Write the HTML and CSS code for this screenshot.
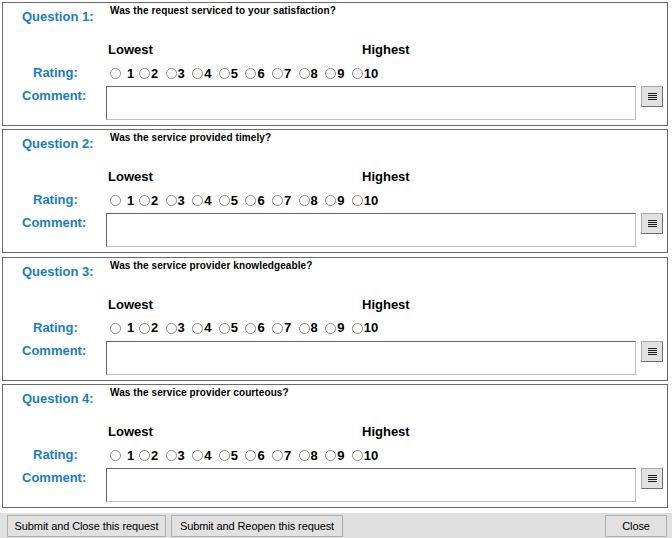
FILE: index.html
```html
<!DOCTYPE html>
<html lang="en">
<head>
    <meta charset="UTF-8">
    <title>Request Survey</title>
    <link rel="stylesheet" href="styles.css">
</head>
<body>
    <div class="survey">
        <!-- Question panels are built by the script below -->
        <div id="questions"></div>

        <div class="actions">
            <button type="button" class="btn btn-close-req">Submit and Close this request</button>
            <button type="button" class="btn btn-reopen">Submit and Reopen this request</button>
            <button type="button" class="btn btn-close">Close</button>
        </div>
    </div>

    <script>
        const questions = [
            'Was the request serviced to your satisfaction?',
            'Was the service provided timely?',
            'Was the service provider knowledgeable?',
            'Was the service provider courteous?'
        ];

        const icon = `<svg width="9" height="7" viewBox="0 0 9 7">
            <path d="M0 0.5h9M0 2.5h9M0 4.5h9M0 6.5h9" stroke="#1e1e1e" stroke-width="1"/>
        </svg>`;

        const holder = document.getElementById('questions');
        questions.forEach(function(text, q) {
            const n = q + 1;
            let radios = '';
            for (let i = 1; i <= 10; i++) {
                radios += `
                    <label class="rate${i === 1 ? ' rate-first' : ''}">
                        <input type="radio" name="rating_${n}" value="${i}">
                        <span>${i}</span>
                    </label>`;
            }
            holder.innerHTML += `
                <div class="panel">
                    <div class="row row-question">
                        <div class="label label-question">Question ${n}:</div>
                        <div class="question-text">${text}</div>
                    </div>
                    <div class="row row-scale">
                        <div class="label"></div>
                        <span class="scale-low">Lowest</span>
                        <span class="scale-high">Highest</span>
                    </div>
                    <div class="row row-rating">
                        <div class="label label-rating">Rating:</div>
                        <div class="rates">${radios}</div>
                    </div>
                    <div class="row row-comment">
                        <div class="label label-comment">Comment:</div>
                        <textarea class="comment" name="comment_${n}"></textarea>
                        <button type="button" class="btn-lines">${icon}</button>
                    </div>
                </div>`;
        });
    </script>
</body>
</html>
```

FILE: styles.css
```css
body {
    margin: 0;
    background: #ffffff;
    font-family: 'Liberation Sans', Arial, sans-serif;
    color: #000000;
}
.survey {
    width: 672px;
    height: 538px;
    padding-top: 2px;
    box-sizing: border-box;
    display: flex;
    flex-direction: column;
}
.panel {
    width: 666px;
    height: 124px;
    margin: 0 0 3.4px 2px;
    border: 1px solid #6a6a6a;
    box-sizing: border-box;
}
.row {
    display: flex;
    align-items: flex-start;
}
.label {
    width: 103px;
    flex: none;
    box-sizing: border-box;
    color: #1a7cc2;
    font-size: 13px;
    font-weight: bold;
    line-height: 16px;
}
.row-question {
    height: 26px;
}
.label-question {
    padding-left: 19px;
    margin-top: 6px;
}
.question-text {
    margin: 2px 0 0 4px;
    font-size: 10px;
    font-weight: bold;
    line-height: 12px;
    letter-spacing: 0.1px;
}
.row-scale {
    padding-top: 13px;
    height: 16px;
    font-size: 13px;
    font-weight: bold;
    line-height: 16px;
}
.scale-low {
    width: 254px;
    margin-left: 2px;
}
.row-rating {
    padding-top: 7px;
    height: 16px;
}
.label-rating {
    padding-left: 30px;
}
.rates {
    display: flex;
    margin-left: 4px;
}
.rate {
    display: flex;
    align-items: center;
    width: 26.6px;
    height: 16px;
    font-size: 13px;
    font-weight: bold;
}
.rate-first {
    width: 29px;
}
.rate input {
    appearance: none;
    -webkit-appearance: none;
    width: 11px;
    height: 11px;
    margin: 1px 1px 0 0;
    border: 1px solid #8a8a8a;
    border-radius: 50%;
    background: #ffffff;
    box-sizing: border-box;
}
.rate-first input {
    margin-right: 6px;
}
.row-comment {
    margin-top: 5px;
}
.label-comment {
    padding-left: 19px;
    margin-top: 2px;
}
.comment {
    width: 530px;
    height: 34px;
    margin: 0;
    padding: 2px;
    border: 1px solid;
    border-color: #646464 #b9c0c7 #b9c0c7 #646464;
    box-sizing: border-box;
    resize: none;
    font-family: inherit;
}
.btn-lines {
    width: 22px;
    height: 21px;
    margin-left: 5px;
    padding: 0;
    border: 1px solid;
    border-color: #a8a8a8 #6e6e6e #6e6e6e #a8a8a8;
    background: #e1e1e1;
    display: flex;
    align-items: center;
    justify-content: center;
}
.actions {
    margin-top: 1px;
    flex: 1;
    background: #e0e0e0;
    display: flex;
    align-items: flex-start;
    gap: 5px;
    padding: 2px 5px 0 7px;
}
.btn {
    height: 22px;
    padding: 0;
    border: 1px solid #adadad;
    background: #e1e1e1;
    font-family: 'Liberation Sans', Arial, sans-serif;
    font-size: 11px;
    letter-spacing: -0.1px;
    white-space: nowrap;
    color: #000000;
}
.btn-close-req {
    width: 159px;
}
.btn-reopen {
    width: 172px;
}
.btn-close {
    width: 62px;
    margin-left: auto;
}
```
